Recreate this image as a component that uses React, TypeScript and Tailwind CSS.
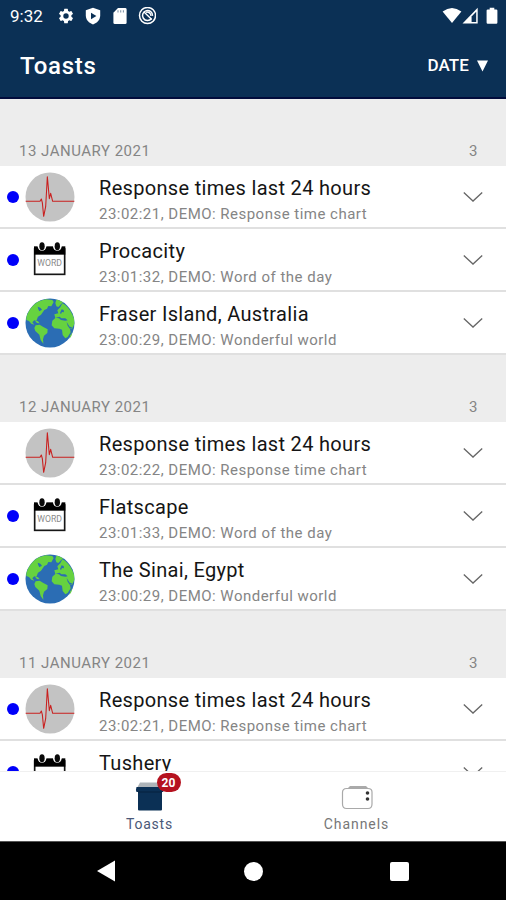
import React from 'react';

type ChannelKind = 'chart' | 'word' | 'world';

interface Toast {
  kind: ChannelKind;
  title: string;
  info: string;
  unread: boolean;
}

interface ToastGroup {
  date: string;
  toasts: Toast[];
}

const groups: ToastGroup[] = [
  {
    date: '13 JANUARY 2021',
    toasts: [
      { kind: 'chart', title: 'Response times last 24 hours', info: '23:02:21, DEMO: Response time chart', unread: true },
      { kind: 'word', title: 'Procacity', info: '23:01:32, DEMO: Word of the day', unread: true },
      { kind: 'world', title: 'Fraser Island, Australia', info: '23:00:29, DEMO: Wonderful world', unread: true },
    ],
  },
  {
    date: '12 JANUARY 2021',
    toasts: [
      { kind: 'chart', title: 'Response times last 24 hours', info: '23:02:22, DEMO: Response time chart', unread: false },
      { kind: 'word', title: 'Flatscape', info: '23:01:33, DEMO: Word of the day', unread: true },
      { kind: 'world', title: 'The Sinai, Egypt', info: '23:00:29, DEMO: Wonderful world', unread: true },
    ],
  },
  {
    date: '11 JANUARY 2021',
    toasts: [
      { kind: 'chart', title: 'Response times last 24 hours', info: '23:02:21, DEMO: Response time chart', unread: true },
      { kind: 'word', title: 'Tushery', info: '', unread: true },
    ],
  },
];

const ChartIcon = () => (
  <svg className="h-[50px] w-[50px]" viewBox="0 0 150 150">
    <circle cx="75" cy="75" r="73.5" fill="#c3c3c3" />
    <path d="M2,88H45L49,81L52,92L56,133L62,104L67,14L73,80L77,64L83,88H148" fill="none" stroke="#c9201f" strokeWidth="3.2" strokeLinejoin="round" />
  </svg>
);

const WordIcon = () => (
  <svg className="h-[50px] w-[50px]" viewBox="0 0 150 150">
    <rect x="29" y="42" width="90" height="76" fill="#fff" stroke="#161616" strokeWidth="5" />
    <rect x="27" y="34" width="94" height="25" fill="#000" />
    <circle cx="51" cy="34" r="13" fill="#fff" />
    <circle cx="97" cy="34" r="13" fill="#fff" />
    <ellipse cx="51" cy="34" rx="8" ry="12" fill="#0a0a0a" />
    <ellipse cx="97" cy="34" rx="8" ry="12" fill="#0a0a0a" />
    <text x="74" y="92" textAnchor="middle" fontSize="26" fill="#8a8a8a" className="font-['Roboto'] tracking-normal">WORD</text>
  </svg>
);

const GlobeIcon = () => (
  <svg className="h-[50px] w-[50px]" viewBox="0 0 150 150">
    <circle cx="75" cy="75" r="73.5" fill="#2b6db4" />
    <g fill="#66d240">
      <path d="M4,58C10,37 24,18 44,9L62,4L82,6L86,12L79,25L70,24L66,32L58,36L48,50L39,56L34,68L28,67L22,73L28,80L19,77L12,69L4,66Z" />
      <path d="M94,5C101,6 108,9 114,13L108,19L100,27L94,25L91,15Z" />
      <path d="M32,82L44,80L55,87L68,94L67,105L57,113L54,124L55,137L47,126L43,110L31,99L28,90Z" />
      <path d="M97,37L106,28L112,16L120,20C133,31 143,47 147,62L148,78L142,91L135,93L137,103L128,117L121,121L113,111L111,95L103,92L88,91L80,82L82,68L91,60L88,49L100,46Z" />
      <path d="M29,67L39,70L44,76L36,75Z" />
      <path d="M136,112L142,103L139,114L133,123Z" />
    </g>
    <g fill="#2b6db4">
      <path d="M92,59L104,56L109,61L121,61L128,67L121,68L108,66L102,61Z" />
      <path d="M38,26L46,29L51,35L43,40L40,34Z" />
      <path d="M110,34L116,36L117,43L111,42L108,48L105,45Z" />
      <path d="M125,72L134,86L142,88L135,93L128,83Z" />
    </g>
  </svg>
);

const icons: Record<ChannelKind, React.ReactNode> = {
  chart: <ChartIcon />,
  word: <WordIcon />,
  world: <GlobeIcon />,
};

function StatusBar() {
  return (
    <div className="flex h-8 items-center pl-[10px] pr-2">
      <span className="w-[47px] text-[17px] leading-8 text-white">9:32</span>
      <svg className="h-[18px] w-[18px]" viewBox="0 0 24 24" fill="#fff">
        <path d="M19.14 12.94c.04-.3.06-.61.06-.94s-.02-.64-.07-.94l2.03-1.58a.49.49 0 0 0 .12-.61l-1.92-3.32a.49.49 0 0 0-.59-.22l-2.39.96a7 7 0 0 0-1.62-.94l-.36-2.54a.48.48 0 0 0-.48-.41h-3.84a.48.48 0 0 0-.47.41l-.36 2.54c-.59.24-1.13.57-1.62.94l-2.39-.96a.48.48 0 0 0-.59.22L2.74 8.87a.48.48 0 0 0 .12.61l2.03 1.58c-.05.3-.09.63-.09.94s.02.64.07.94l-2.03 1.58a.49.49 0 0 0-.12.61l1.92 3.32c.12.22.37.29.59.22l2.39-.96c.5.38 1.03.7 1.62.94l.36 2.54c.05.24.24.41.48.41h3.84c.24 0 .44-.17.47-.41l.36-2.54a6.8 6.8 0 0 0 1.62-.94l2.39.96c.22.08.47 0 .59-.22l1.92-3.32a.48.48 0 0 0-.12-.61zM12 15.6a3.6 3.6 0 1 1 0-7.2 3.6 3.6 0 0 1 0 7.2z" />
      </svg>
      <svg className="ml-[9px] h-[18px] w-[18px]" viewBox="0 0 18 18">
        <path d="M9 .8L16.2 3.2V8.6C16.2 13 13 16.2 9 17.5C5 16.2 1.8 13 1.8 8.6V3.2Z" fill="#fff" />
        <path d="M7 5.8L12.4 9L7 12.2Z" fill="#0b3055" />
      </svg>
      <svg className="ml-[9px] h-[18px] w-[18px]" viewBox="0 0 18 18">
        <path d="M7 1H14.2Q15.6 1 15.6 2.4V15.8Q15.6 17 14.2 17H3.8Q2.4 17 2.4 15.8V5.8Z" fill="#fff" />
        <path d="M7 3.2V5.4M9.7 3.2V5.4M12.4 3.2V5.4" stroke="#8497aa" strokeWidth="1.1" />
      </svg>
      <svg className="ml-[9px] h-[18px] w-[18px]" viewBox="0 0 18 18" fill="none" stroke="#fff">
        <circle cx="9.5" cy="8.5" r="8" strokeWidth="1.5" />
        <path d="M13.5 11.5A5 5 0 1 1 14.5 8.9" strokeWidth="1.5" />
        <path d="M6 5L13.8 12.5M8 5.2A4 4 0 0 1 13 9" strokeWidth="1.4" />
      </svg>
      <div className="ml-auto flex items-center">
        <svg className="h-[18px] w-5" viewBox="0 0 20 18">
          <path d="M.6 4.5Q10-2.7 19.4 4.5L10 16.1Z" fill="#fff" />
        </svg>
        <svg className="h-[18px] w-[17px]" viewBox="0 0 17 18">
          <path d="M.5 16.5L15.7 .7V16.5Z" fill="#fff" />
          <path d="M9.6 9.4L14.2 4.8V15H9.6Z" fill="#0b3055" />
        </svg>
        <svg className="ml-[7px] h-[18px] w-3" viewBox="0 0 12 18">
          <path d="M3.7 .8H8.3V2.4H10.2Q11.4 2.4 11.4 3.6V15.6Q11.4 16.8 10.2 16.8H1.8Q.6 16.8 .6 15.6V3.6Q.6 2.4 1.8 2.4H3.7Z" fill="#fff" />
        </svg>
      </div>
    </div>
  );
}

function ToastRow({ toast }: { toast: Toast }) {
  return (
    <div className="flex h-[63px] items-center border-b-2 border-[#e0e0e0] bg-white pl-[7px] pr-[23px]">
      <div className={`h-3 w-3 rounded-full ${toast.unread ? 'bg-[#0000fa]' : 'bg-transparent'}`} />
      <div className="ml-[6px]">{icons[toast.kind]}</div>
      <div className="ml-6 h-full grow whitespace-nowrap pt-[9px]">
        <div className="text-[20px] leading-[27px] tracking-[0.32px] text-[#151515]">{toast.title}</div>
        <div className="text-[15px] leading-[24px] tracking-[0.48px] text-[#858585]">{toast.info}</div>
      </div>
      <svg className="h-3 w-5" viewBox="0 0 20 12" fill="none" stroke="#666" strokeWidth="1.3">
        <path d="M.8 1.5L10 10L19.2 1.5" />
      </svg>
    </div>
  );
}

function BottomTabs() {
  return (
    <div className="flex h-[70px] shrink-0 border-t border-[#f0f0f0] bg-white px-[46px]">
      <div className="flex w-[207px] flex-col items-center">
        <div className="relative mt-[10px] h-[30px] w-[30px]">
          <svg className="h-[30px] w-[30px]" viewBox="0 0 30 30">
            <path d="M5 .5H25L29 6H2Z" fill="#aeb4b9" />
            <path d="M1.5 5H28.5Q29.5 7.500 28 10H27V27.500Q27 28.500 26 28.500H4Q3 28.500 3 27.500V10H1.500Q.5 7.500 1.500 5Z" fill="#0b3055" />
            <path d="M3 10H27" stroke="#06213f" />
          </svg>
          <span className="absolute -top-[9px] left-[22px] flex h-[19px] w-6 items-center justify-center rounded-full bg-[#b5121f] text-[12px] font-bold text-white">20</span>
        </div>
        <span className="mt-[2px] text-[14px] leading-5 tracking-[0.75px] text-[#4a5878]">Toasts</span>
      </div>
      <div className="flex w-[207px] flex-col items-center">
        <svg className="mt-[10px] h-[30px] w-8" viewBox="0 0 32 30" fill="none">
          <path d="M6 7L9 4H25L28 7Z" fill="#aaa" />
          <path d="M5.5 6.5H27Q31 6.5 31 10V22Q31 26.500 27 26.500H5.500Q1.500 26.500 1.500 22V10.500Q1.500 6.500 5.500 6.500Z" fill="#fff" stroke="#a9a9a9" strokeWidth="1.2" />
          <circle cx="26.5" cy="11" r="1.8" fill="#333" />
          <circle cx="26.5" cy="17" r="1.8" fill="#333" />
        </svg>
        <span className="mt-[2px] text-[14px] leading-5 tracking-[0.95px] text-[#777]">Channels</span>
      </div>
    </div>
  );
}

function SystemNav() {
  return (
    <div className="flex h-[59px] shrink-0 items-center justify-between border-t border-[#555] bg-black pl-24 pr-[97px]">
      <svg className="h-[22px] w-5" viewBox="0 0 20 22"><path d="M1 11L19 .5V21.5Z" fill="#fff" /></svg>
      <div className="h-[19px] w-[19px] rounded-full bg-white" />
      <div className="h-[19px] w-[19px] rounded-[2px] bg-white" />
    </div>
  );
}

export default function App() {
  return (
    <div className="flex h-[900px] w-[506px] flex-col overflow-hidden bg-[#ededed] font-['Roboto',sans-serif]">
      <header className="h-[99px] shrink-0 border-b-2 border-[#020c3c] bg-[#0b3055]">
        <StatusBar />
        <div className="flex h-[67px] items-center justify-between pl-5 pr-[18px] text-white">
          <h1 className="text-[24px] font-medium tracking-[0.7px]">Toasts</h1>
          <div className="flex items-center gap-2 text-[17px] font-medium tracking-[0.1px]">
            <span>DATE</span>
            <svg className="h-3 w-[11px]" viewBox="0 0 11 12"><path d="M0 .5H11L5.5 11.5Z" fill="#fff" /></svg>
          </div>
        </div>
      </header>

      <main className="min-h-0 grow overflow-hidden">
        {groups.map(group => (
          <section key={group.date}>
            <div className="flex h-[67px] items-end justify-between pb-[5px] pl-[19px] pr-7 text-[15px] leading-5 tracking-[0.5px] text-[#858585]">
              <span>{group.date}</span>
              <span>3</span>
            </div>
            {group.toasts.map(toast => <ToastRow key={toast.kind} toast={toast} />)}
          </section>
        ))}
      </main>

      <BottomTabs />
      <SystemNav />
    </div>
  );
}
